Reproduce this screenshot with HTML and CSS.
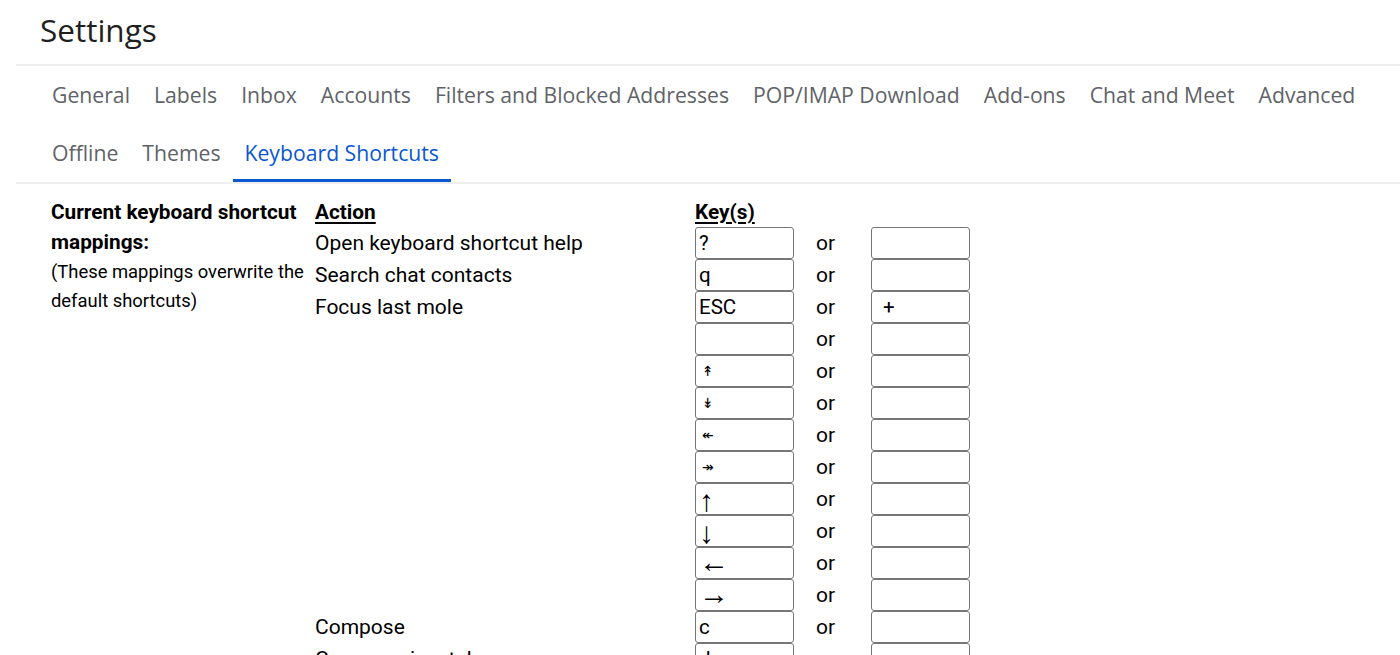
FILE: index.html
```html
<!DOCTYPE html>
<html>
<head>
<meta charset="utf-8">
<link rel="stylesheet" href="styles.css">
</head>
<body>
<div class="page">
  <h1 class="title">Settings</h1>
  <nav class="tabs">
    <div class="tab-row">
      <a class="tab">General</a>
      <a class="tab">Labels</a>
      <a class="tab">Inbox</a>
      <a class="tab">Accounts</a>
      <a class="tab">Filters and Blocked Addresses</a>
      <a class="tab">POP/IMAP Download</a>
      <a class="tab">Add-ons</a>
      <a class="tab">Chat and Meet</a>
      <a class="tab">Advanced</a>
    </div>
    <div class="tab-row">
      <a class="tab">Offline</a>
      <a class="tab">Themes</a>
      <a class="tab active">Keyboard Shortcuts</a>
    </div>
  </nav>
  <section class="content">
    <div class="desc">
      <div class="desc-title">Current keyboard shortcut mappings:</div>
      <div class="desc-note">(These mappings overwrite the default shortcuts)</div>
    </div>
    <div class="grid">
      <div class="head">Action</div>
      <div class="head">Key(s)</div>
      <div></div>
      <div></div>

      <div class="action">Open keyboard shortcut help</div>
      <input class="key" type="text" value="?"><div class="or">or</div><input class="key" type="text" value="">

      <div class="action">Search chat contacts</div>
      <input class="key" type="text" value="q"><div class="or">or</div><input class="key" type="text" value="">

      <div class="action">Focus last mole</div>
      <input class="key" type="text" value="ESC"><div class="or">or</div><input class="key pad" type="text" value="+">

      <div class="action"></div>
      <input class="key" type="text" value=""><div class="or">or</div><input class="key" type="text" value="">

      <div class="action"></div>
      <input class="key tiny" type="text" value="↟"><div class="or">or</div><input class="key" type="text" value="">

      <div class="action"></div>
      <input class="key tiny" type="text" value="↡"><div class="or">or</div><input class="key" type="text" value="">

      <div class="action"></div>
      <input class="key tiny" type="text" value="↞"><div class="or">or</div><input class="key" type="text" value="">

      <div class="action"></div>
      <input class="key tiny" type="text" value="↠"><div class="or">or</div><input class="key" type="text" value="">

      <div class="action"></div>
      <input class="key arrow vert" type="text" value="↑"><div class="or">or</div><input class="key" type="text" value="">

      <div class="action"></div>
      <input class="key arrow vert" type="text" value="↓"><div class="or">or</div><input class="key" type="text" value="">

      <div class="action"></div>
      <input class="key arrow" type="text" value="←"><div class="or">or</div><input class="key" type="text" value="">

      <div class="action"></div>
      <input class="key arrow" type="text" value="→"><div class="or">or</div><input class="key" type="text" value="">

      <div class="action">Compose</div>
      <input class="key" type="text" value="c"><div class="or">or</div><input class="key" type="text" value="">

      <div class="action">Compose in a tab</div>
      <input class="key" type="text" value="d"><div class="or">or</div><input class="key" type="text" value="">

      <div class="action">Search mail</div>
      <input class="key" type="text" value="/"><div class="or">or</div><input class="key" type="text" value="">
    </div>
  </section>
</div>
</body>
</html>
```
FILE: styles.css
```css
html, body {
  margin: 0;
  padding: 0;
  background: #ffffff;
}
body {
  font-family: Roboto, "Liberation Sans", Arial, sans-serif;
  color: #202124;
}
.page {
  padding-left: 16px;
}
.title {
  margin: 0;
  height: 64px;
  padding-left: 24px;
  font-family: "Open Sans", Roboto, sans-serif;
  font-weight: 400;
  font-size: 31.5px;
  line-height: 60px;
  color: #1f1f1f;
  border-bottom: 2px solid #eeeeee;
}
.tabs {
  padding-left: 24px;
  border-bottom: 2px solid #eeeeee;
}
.tab-row {
  display: flex;
  height: 58px;
}
.tab {
  display: flex;
  align-items: center;
  padding: 0 12px 1px;
  font-family: "Open Sans", Roboto, sans-serif;
  font-size: 21.2px;
  color: #5f6368;
  white-space: nowrap;
  box-sizing: border-box;
}
.tab.active {
  color: #0b57d0;
  border-bottom: 3px solid #0b57d0;
  padding-top: 2px;
}
.content {
  display: flex;
  padding-left: 35px;
  padding-top: 13px;
}
.desc {
  width: 264px;
  flex: none;
}
.desc-title {
  font-weight: 700;
  font-size: 20.8px;
  line-height: 30px;
  color: #000;
}
.desc-note {
  font-size: 18.4px;
  line-height: 29px;
  color: #000;
}
.grid {
  display: grid;
  grid-template-columns: 380px 99px 77px 99px;
  grid-template-rows: 30px;
  grid-auto-rows: 32px;
}
.head {
  font-weight: 700;
  font-size: 20.8px;
  line-height: 30px;
  text-decoration: underline;
  text-underline-offset: 3px;
  color: #000;
}
.action {
  font-size: 21px;
  line-height: 32px;
  color: #000;
}
.or {
  font-size: 21px;
  line-height: 32px;
  padding-left: 22px;
  color: #000;
}
.key {
  box-sizing: border-box;
  width: 99px;
  height: 32px;
  margin: 0;
  padding: 0 3px;
  border: 1.5px solid #767676;
  border-radius: 3px;
  font-family: Roboto, "Liberation Sans", sans-serif;
  font-size: 20.5px;
  color: #000;
  background: #fff;
  outline: none;
}
.key.pad {
  padding-left: 11px;
}
.key.tiny {
  font-size: 14px;
  padding-left: 6px;
  font-family: "DejaVu Sans", sans-serif;
}
.key.arrow {
  font-size: 30px;
  padding: 0 3px 2px;
  font-family: "Liberation Sans", "DejaVu Sans", sans-serif;
}
.key.arrow.vert {
  padding: 4px 3px 0;
}
```
